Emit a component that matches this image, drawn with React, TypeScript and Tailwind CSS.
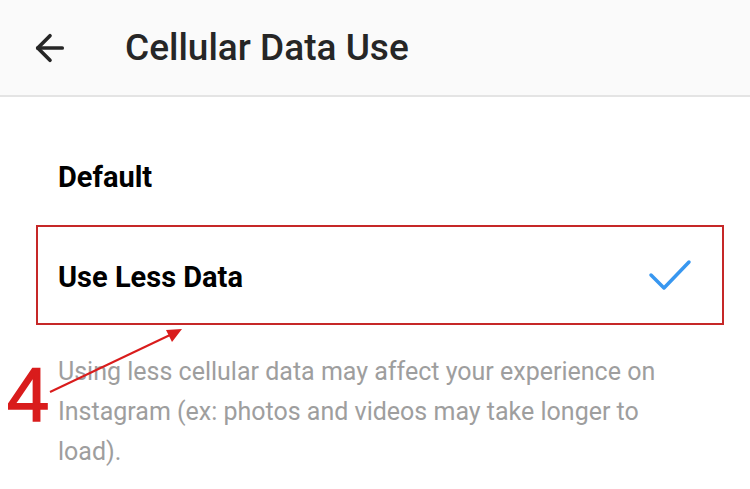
import { ArrowLeft } from "lucide-react";

export default function App() {
  return (
    <div className="relative w-[750px] h-[489px] overflow-hidden bg-white font-['Roboto',sans-serif]">
      {/* top bar */}
      <header className="h-[97px] bg-[#fafafa] border-b-2 border-[#e4e4e4] flex items-center">
        <ArrowLeft className="ml-[29px] w-[42px] h-[42px] text-[#262626]" strokeWidth={2.1} />
        <h1 className="ml-[54px] text-[37px] font-medium text-[#262626]">
          Cellular Data Use
        </h1>
      </header>

      <div className="pt-[28px]">
        <div className="h-[100px] flex items-center pl-[58px] pt-[6px]">
          <span className="text-[29px] font-bold text-black">Default</span>
        </div>

        <div className="h-[100px] ml-[36px] w-[688px] border-2 border-[#c62828] flex items-center justify-between pl-[20px] pr-[30px] pt-[6px]">
          <span className="text-[29px] font-bold text-black">Use Less Data</span>
          <svg width="44" height="34" viewBox="0 0 44 34" className="-mt-[6px]">
            <path d="M3 17 L16 30 L41 4" fill="none" stroke="#3897f0" strokeWidth="3.5" strokeLinecap="round" strokeLinejoin="round" />
          </svg>
        </div>

        <p className="mt-[27px] pl-[58px] w-[690px] text-[25px] leading-[40px] text-[#9e9e9e]">
          Using less cellular data may affect your experience on Instagram (ex: photos and videos may take longer to load).
        </p>
      </div>

      {/* annotation */}
      <span className="absolute left-[7px] top-[357px] text-[76px] leading-none text-[#d91c1c] font-['Liberation_Sans',sans-serif] [-webkit-text-stroke:1.5px_#d91c1c]">
        4
      </span>
      <svg className="absolute left-0 top-0" width="750" height="489">
        <line x1="50" y1="392" x2="170" y2="335" stroke="#d91c1c" strokeWidth="2" />
        <polygon points="182,329 166,330 172,342" fill="#d91c1c" />
      </svg>
    </div>
  );
}
